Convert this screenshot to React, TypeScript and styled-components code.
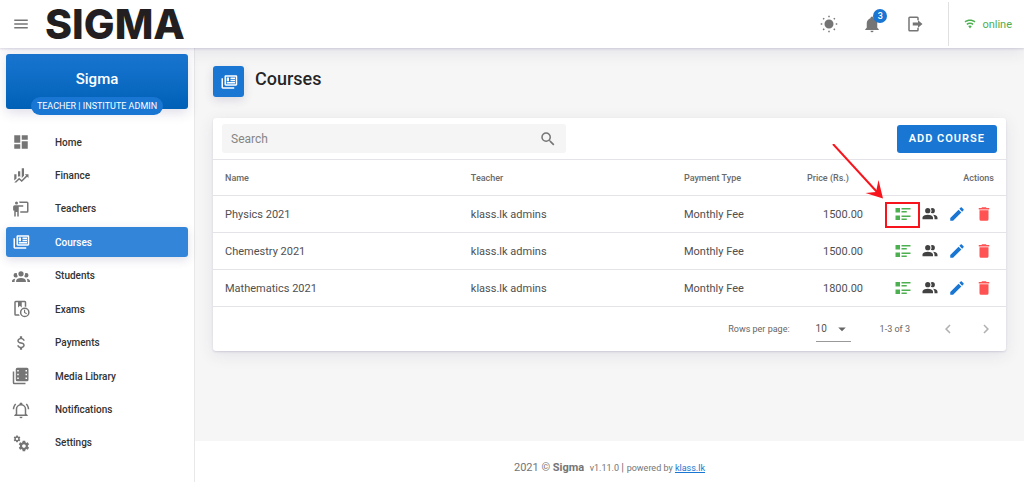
import React from "react";
import styled, { createGlobalStyle } from "styled-components";

const blue = "#1976d2";

const GlobalStyle = createGlobalStyle`
  *, *::before, *::after { box-sizing: border-box; }
  body {
    margin: 0;
    background: #f6f6f6;
    color: rgba(0, 0, 0, 0.87);
    font-family: Roboto, "Liberation Sans", sans-serif;
    font-size: 12px;
  }
  button, input, select { font-family: inherit; }
`;

const paths = {
  menu: "M3,6H21V8H3V6M3,11H21V13H3V11M3,16H21V18H3V16Z",
  dashboard: "M13,3V9H21V3M13,21H21V11H13M3,21H11V15H3M3,13H11V3H3V13Z",
  finance:
    "M6,16.5L3,19.44V11H6M11,14.66L9.43,13.32L8,14.64V7H11M16,13L13,16V3H16M18.81,12.81L17,11H22V16L20.21,14.21L13,21.36L9.53,18.34L5.75,22H3L9.47,15.66L13,18.64",
  teach:
    "M20,17A2,2 0 0,0 22,15V4A2,2 0 0,0 20,2H9.46C9.81,2.61 10,3.3 10,4H20V15H11V17M15,7V9H9V22H7V16H5V22H3V14H1.5V9A2,2 0 0,1 3.5,7H15M8,4A2,2 0 0,1 6,6A2,2 0 0,1 4,4A2,2 0 0,1 6,2A2,2 0 0,1 8,4Z",
  news: "M4 7V19H19V21H4C2 21 2 19 2 19V7H4M21 5V15H8V5H21M21.3 3H7.7C6.76 3 6 3.7 6 4.55V15.45C6 16.31 6.76 17 7.7 17H21.3C22.24 17 23 16.31 23 15.45V4.55C23 3.7 22.24 3 21.3 3M9 6H12V11H9V6M20 14H9V12H20V14M20 8H14V6H20V8M20 11H14V9H20V11Z",
  group:
    "M12,5.5A3.5,3.5 0 0,1 15.5,9A3.5,3.5 0 0,1 12,12.5A3.5,3.5 0 0,1 8.5,9A3.5,3.5 0 0,1 12,5.5M5,8C5.56,8 6.08,8.15 6.53,8.42C6.38,9.85 6.8,11.27 7.66,12.38C7.16,13.34 6.16,14 5,14A3,3 0 0,1 2,11A3,3 0 0,1 5,8M19,8A3,3 0 0,1 22,11A3,3 0 0,1 19,14C17.84,14 16.84,13.34 16.34,12.38C17.2,11.27 17.62,9.85 17.47,8.42C17.92,8.15 18.44,8 19,8M5.5,18.25C5.5,16.18 8.41,14.5 12,14.5C15.59,14.5 18.5,16.18 18.5,18.25V20H5.5V18.25M0,20V18.5C0,17.11 1.89,15.94 4.45,15.6C3.86,16.28 3.5,17.22 3.5,18.25V20H0M24,20H20.5V18.25C20.5,17.22 20.14,16.28 19.55,15.6C22.11,15.94 24,17.11 24,18.5V20Z",
  bookClock:
    "M5 1H17A2 2 0 0 1 19 3V9.1A7 7 0 0 0 17 9V3H13V10L10.5 7.8L8 10V3H5V19H9.3A7 7 0 0 0 10.3 21H5A2 2 0 0 1 3 19V3A2 2 0 0 1 5 1M17 10A6.5 6.5 0 1 1 17 23A6.5 6.5 0 1 1 17 10M17 12A4.5 4.5 0 1 0 17 21A4.5 4.5 0 1 0 17 12M16 13H17.5V16.2L20 17.7L19.2 18.9L16 17Z",
  dollar:
    "M7,15H9C9,16.08 10.37,17 12,17C13.63,17 15,16.08 15,15C15,13.9 13.96,13.5 11.76,12.97C9.64,12.44 7,11.78 7,9C7,7.21 8.47,5.69 10.5,5.18V3H13.5V5.18C15.53,5.69 17,7.21 17,9H15C15,7.92 13.63,7 12,7C10.37,7 9,7.92 9,9C9,10.1 10.04,10.5 12.24,11.03C14.36,11.56 17,12.22 17,15C17,16.79 15.53,18.31 13.5,18.82V21H10.5V18.82C8.47,18.31 7,16.79 7,15Z",
  film: "M3 6H1V21A2 2 0 0 0 3 23H18V21H3V6M7 1H20A2 2 0 0 1 22 3V17A2 2 0 0 1 20 19H7A2 2 0 0 1 5 17V3A2 2 0 0 1 7 1M7 4V6H9V4H7M7 9V11H9V9H7M7 14V16H9V14H7M18 4V6H20V4H18M18 9V11H20V9H18M18 14V16H20V14H18Z",
  bellRing:
    "M10,21H14A2,2 0 0,1 12,23A2,2 0 0,1 10,21M21,19V20H3V19L5,17V11C5,7.9 7.03,5.17 10,4.29C10,4.19 10,4.1 10,4A2,2 0 0,1 12,2A2,2 0 0,1 14,4C14,4.1 14,4.19 14,4.29C16.97,5.17 19,7.9 19,11V17L21,19M17,11A5,5 0 0,0 12,6A5,5 0 0,0 7,11V18H17V11M19.75,3.19L18.33,4.61C20.04,6.3 21,8.6 21,11H23C23,8.07 21.84,5.25 19.75,3.19M1,11H3C3,8.6 3.96,6.3 5.67,4.61L4.25,3.19C2.16,5.25 1,8.07 1,11Z",
  cogs: "M15.9,18.45C17.25,18.45 18.35,17.35 18.35,16C18.35,14.65 17.25,13.55 15.9,13.55C14.54,13.55 13.45,14.65 13.45,16C13.45,17.35 14.54,18.45 15.9,18.45M21.1,16.68L22.58,17.84C22.71,17.95 22.75,18.13 22.66,18.29L21.26,20.71C21.17,20.86 21,20.92 20.83,20.86L19.09,20.16C18.73,20.44 18.33,20.67 17.91,20.85L17.64,22.7C17.62,22.87 17.47,23 17.3,23H14.5C14.32,23 14.18,22.87 14.15,22.7L13.89,20.85C13.46,20.67 13.07,20.44 12.71,20.16L10.96,20.86C10.81,20.92 10.62,20.86 10.54,20.71L9.14,18.29C9.05,18.13 9.09,17.95 9.22,17.84L10.7,16.68L10.65,16L10.7,15.31L9.22,14.16C9.09,14.05 9.05,13.86 9.14,13.71L10.54,11.29C10.62,11.13 10.81,11.07 10.96,11.13L12.71,11.84C13.07,11.56 13.46,11.32 13.89,11.15L14.15,9.29C14.18,9.13 14.32,9 14.5,9H17.3C17.47,9 17.62,9.13 17.64,9.29L17.91,11.15C18.33,11.32 18.73,11.56 19.09,11.84L20.83,11.13C21,11.07 21.17,11.13 21.26,11.29L22.66,13.71C22.75,13.86 22.71,14.05 22.58,14.16L21.1,15.31L21.15,16L21.1,16.68M6.69,8.07C7.56,8.07 8.26,7.37 8.26,6.5C8.26,5.63 7.56,4.92 6.69,4.92A1.58,1.58 0 0,0 5.11,6.5C5.11,7.37 5.82,8.07 6.69,8.07M10.03,6.94L11,7.68C11.07,7.75 11.09,7.87 11.03,7.97L10.13,9.53C10.08,9.63 9.96,9.67 9.86,9.63L8.74,9.18L8,9.62L7.81,10.81C7.79,10.92 7.7,11 7.59,11H5.79C5.67,11 5.58,10.92 5.56,10.81L5.4,9.62L4.64,9.18L3.52,9.63C3.41,9.67 3.3,9.63 3.24,9.53L2.34,7.97C2.28,7.87 2.31,7.75 2.39,7.68L3.34,6.94L3.31,6.5L3.34,6.06L2.39,5.32C2.31,5.25 2.28,5.13 2.34,5.03L3.24,3.47C3.3,3.37 3.41,3.33 3.52,3.37L4.63,3.82L5.4,3.38L5.56,2.19C5.58,2.08 5.67,2 5.79,2H7.59C7.7,2 7.79,2.08 7.81,2.19L8,3.38L8.74,3.82L9.86,3.37C9.96,3.33 10.08,3.37 10.13,3.47L11.03,5.03C11.09,5.13 11.07,5.25 11,5.32L10.03,6.06L10.06,6.5L10.03,6.94Z",
  sun: "M12 6A6 6 0 1 1 12 18A6 6 0 1 1 12 6M11 1H13V3H11V1M11 21H13V23H11V21M1 11H3V13H1V11M21 11H23V13H21V11M4.9 3.5L6.3 4.9L4.9 6.3L3.5 4.9L4.9 3.5M19.1 3.5L20.5 4.9L19.1 6.3L17.7 4.9L19.1 3.5M4.9 17.7L6.3 19.1L4.9 20.5L3.5 19.1L4.9 17.7M19.1 17.7L20.5 19.1L19.1 20.5L17.7 19.1L19.1 17.7Z",
  bell: "M21,19V20H3V19L5,17V11C5,7.9 7.03,5.17 10,4.29C10,4.19 10,4.1 10,4A2,2 0 0,1 12,2A2,2 0 0,1 14,4C14,4.1 14,4.19 14,4.29C16.97,5.17 19,7.9 19,11V17L21,19M14,21A2,2 0 0,1 12,23A2,2 0 0,1 10,21",
  exit: "M5 2H15A2 2 0 0 1 17 4V7H15V4H5V20H15V17H17V20A2 2 0 0 1 15 22H5A2 2 0 0 1 3 20V4A2 2 0 0 1 5 2M9 10H16V7L22 12L16 17V14H9Z",
  wifi: "M12,21L15.6,16.2C14.6,15.45 13.35,15 12,15C10.65,15 9.4,15.45 8.4,16.2L12,21M12,3C7.95,3 4.21,4.34 1.2,6.6L3,9C5.5,7.12 8.62,6 12,6C15.38,6 18.5,7.12 21,9L22.8,6.6C19.79,4.34 16.05,3 12,3M12,9C9.3,9 6.81,9.89 4.8,11.4L6.6,13.8C8.1,12.67 9.97,12 12,12C14.03,12 15.9,12.67 17.4,13.8L19.2,11.4C17.19,9.89 14.7,9 12,9Z",
  search:
    "M9.5,3A6.5,6.5 0 0,1 16,9.5C16,11.11 15.41,12.59 14.44,13.73L14.71,14H15.5L20.5,19L19,20.5L14,15.5V14.71L13.73,14.44C12.59,15.41 11.11,16 9.5,16A6.5,6.5 0 0,1 3,9.5A6.5,6.5 0 0,1 9.5,3M9.5,5C7,5 5,7 5,9.5C5,12 7,14 9.5,14C12,14 14,12 14,9.5C14,7 12,5 9.5,5Z",
  list: "M2 4H8V10H2V4M10 4H22V6H10V4M10 8H17V10H10V8M2 14H8V20H2V14M10 14H22V16H10V14M10 18H17V20H10V18Z",
  people:
    "M16 17V19H2V17S2 13 9 13 16 17 16 17M12.5 7.5A3.5 3.5 0 1 0 9 11A3.5 3.5 0 0 0 12.5 7.5M15.94 13A5.32 5.32 0 0 1 18 17V19H22V17S22 13.37 15.94 13M15 4A3.39 3.39 0 0 0 13.07 4.59A5 5 0 0 1 13.07 10.41A3.39 3.39 0 0 0 15 11A3.5 3.5 0 0 0 15 4Z",
  pencil:
    "M20.71,7.04C21.1,6.65 21.1,6 20.71,5.63L18.37,3.29C18,2.9 17.35,2.9 16.96,3.29L15.12,5.12L18.87,8.87M3,17.25V21H6.75L17.81,9.93L14.06,6.18L3,17.25Z",
  trash: "M19,4H15.5L14.5,3H9.5L8.5,4H5V6H19M6,19A2,2 0 0,0 8,21H16A2,2 0 0,0 18,19V7H6V19Z",
  left: "M15.41,16.58L10.83,12L15.41,7.41L14,6L8,12L14,18L15.41,16.58Z",
  right: "M8.59,16.58L13.17,12L8.59,7.41L10,6L16,12L10,18L8.59,16.58Z",
  caret: "M7,10L12,15L17,10H7Z",
};

type IconName = keyof typeof paths;

const Svg = styled.svg<{ $size: number }>`
  display: block;
  flex: none;
  width: ${(p) => p.$size}px;
  height: ${(p) => p.$size}px;
  fill: currentColor;
`;

const Icon = ({ name, size = 18 }: { name: IconName; size?: number }) => (
  <Svg $size={size} viewBox="0 0 24 24" aria-hidden="true">
    <path fillRule="evenodd" d={paths[name]} />
  </Svg>
);

const Page = styled.div`
  display: flex;
  flex-direction: column;
  min-height: 100vh;
`;

const TopBar = styled.header`
  position: relative;
  z-index: 2;
  display: flex;
  align-items: center;
  height: 48px;
  padding-left: 12px;
  background: #fff;
  box-shadow: 0 1px 2px rgba(60, 50, 110, 0.16), 0 4px 16px rgba(60, 50, 110, 0.1);
`;

const IconButton = styled.button<{ $color?: string }>`
  position: relative;
  display: flex;
  padding: 0;
  border: 0;
  background: none;
  color: ${(p) => p.$color ?? "#757575"};
  cursor: pointer;

  &:disabled {
    color: #b0b0b0;
    cursor: default;
  }
`;

const Brand = styled.div`
  margin-left: 15px;
  color: #231f20;
  font-family: Inter, "Liberation Sans", sans-serif;
  font-size: 41px;
  font-weight: 800;
  line-height: 46px;
`;

const Tools = styled.div`
  display: flex;
  align-items: center;
  gap: 25px;
  margin-left: auto;
  padding-right: 24px;
`;

const Badge = styled.span`
  position: absolute;
  top: -6px;
  left: 10px;
  width: 14px;
  height: 14px;
  border-radius: 50%;
  background: ${blue};
  color: #fff;
  font-size: 9px;
  font-weight: 500;
  line-height: 14px;
  text-align: center;
`;

const Status = styled.div`
  display: flex;
  align-items: center;
  gap: 6px;
  height: 44px;
  padding: 0 12px 0 15px;
  border-left: 1px solid #e0e0e0;
  color: #4caf50;
  font-size: 11px;
`;

const Body = styled.div`
  display: flex;
  flex: 1;
`;

const Sidebar = styled.aside`
  flex: none;
  width: 195px;
  padding: 6px 6px 0;
  border-right: 1px solid #e8e8e8;
  background: #fff;
`;

const Profile = styled.div`
  display: flex;
  flex-direction: column;
  align-items: center;
  height: 55px;
  padding-top: 15px;
  border-radius: 3px;
  background: linear-gradient(${blue}, #0060b6);
  color: #fff;
  box-shadow: 0 4px 12px rgba(60, 50, 110, 0.16);
`;

const ProfileName = styled.div`
  font-size: 15px;
  font-weight: 500;
  line-height: 20px;
`;

const RoleChip = styled.div`
  margin-top: 8px;
  padding: 0 6px;
  border-radius: 9px;
  background: ${blue};
  font-size: 9px;
  line-height: 18px;
  white-space: nowrap;
`;

const Menu = styled.nav`
  display: flex;
  flex-direction: column;
  justify-content: space-between;
  height: 331px;
  margin-top: 18px;
`;

const MenuLink = styled.a<{ $active?: boolean }>`
  display: flex;
  align-items: center;
  gap: 25px;
  height: 30px;
  padding-left: 6px;
  border-radius: 3px;
  color: ${(p) => (p.$active ? "#fff" : "#333")};
  background: ${(p) => (p.$active ? "#3385d9" : "none")};
  box-shadow: ${(p) => (p.$active ? "0 3px 10px rgba(60, 50, 110, 0.16)" : "none")};
  font-size: 10px;
  font-weight: 500;
  text-decoration: none;

  svg { color: ${(p) => (p.$active ? "#fff" : "#757575")}; }
`;

const Content = styled.div`
  display: flex;
  flex: 1;
  flex-direction: column;
  min-width: 0;
`;

const Main = styled.main`
  flex: 1;
  padding: 18px 18px 24px;
`;

const Heading = styled.div`
  display: flex;
  gap: 11px;
  margin-bottom: 21px;
`;

const HeadingTile = styled.div`
  display: flex;
  align-items: center;
  justify-content: center;
  width: 31px;
  height: 31px;
  border-radius: 3px;
  background: ${blue};
  color: #fff;
  box-shadow: 0 3px 10px rgba(60, 50, 110, 0.16);
`;

const Title = styled.h1`
  margin: 0;
  font-size: 18px;
  font-weight: 500;
  line-height: 26px;
`;

const Card = styled.section`
  border-radius: 3px;
  background: #fff;
  box-shadow: 0 1px 2px rgba(60, 50, 110, 0.16), 0 4px 16px rgba(60, 50, 110, 0.1);
`;

const Toolbar = styled.div`
  display: flex;
  align-items: center;
  justify-content: space-between;
  height: 41px;
  padding: 0 9px;
`;

const SearchBox = styled.label`
  display: flex;
  flex: 0 1 344px;
  align-items: center;
  height: 29px;
  padding: 0 9px;
  border-radius: 3px;
  background: #f5f5f5;
  color: #757575;
`;

const SearchInput = styled.input`
  flex: 1;
  min-width: 0;
  padding: 0;
  border: 0;
  outline: 0;
  background: none;
  font-size: 12px;

  &::placeholder { color: #858585; }
`;

const AddButton = styled.button`
  height: 28px;
  padding: 0 12px;
  border: 0;
  border-radius: 3px;
  background: ${blue};
  color: #fff;
  font-size: 11px;
  font-weight: 600;
  letter-spacing: 1px;
  cursor: pointer;
`;

const Table = styled.table`
  width: 100%;
  border-collapse: collapse;
  table-layout: fixed;
`;

const HeadCell = styled.th<{ $right?: boolean; $width?: string; $inset?: boolean }>`
  width: ${(p) => p.$width ?? "auto"};
  height: 36px;
  padding: 0 ${(p) => (p.$inset ? 26 : 12)}px 0 ${(p) => (p.$inset ? 0 : 12)}px;
  border-top: 1px solid #e4e4e8;
  border-bottom: 1px solid #e4e4e8;
  color: #6a6a6a;
  font-size: 9px;
  font-weight: 500;
  text-align: ${(p) => (p.$right ? "right" : "left")};
  white-space: nowrap;
`;

const Cell = styled.td<{ $right?: boolean }>`
  height: 37px;
  padding: 0 12px;
  border-bottom: 1px solid #e4e4e8;
  color: #505050;
  font-size: 11px;
  text-align: ${(p) => (p.$right ? "right" : "left")};
`;

const Actions = styled.div`
  display: flex;
  justify-content: flex-end;
  gap: 9px;
  padding-right: 1px;
`;

const Callout = styled.svg`
  position: absolute;
  right: -8px;
  bottom: -5px;
  width: 92px;
  height: 84px;
  fill: none;
  stroke: #f8141c;
  pointer-events: none;
`;

const Pager = styled.div`
  display: flex;
  align-items: center;
  justify-content: flex-end;
  height: 44px;
  padding-right: 11px;
  color: #666;
  font-size: 9px;
`;

const RowsLabel = styled.label`
  display: flex;
  align-items: center;
  gap: 26px;
`;

const SelectWrap = styled.span`
  position: relative;
  display: flex;
  align-items: center;
  width: 35px;
  height: 26px;
  border-bottom: 1px solid #999;

  svg {
    position: absolute;
    right: 0;
    pointer-events: none;
  }
`;

const RowsSelect = styled.select`
  width: 100%;
  padding: 0;
  border: 0;
  appearance: none;
  background: none;
  color: #555;
  font-size: 10px;
`;

const Range = styled.span`
  margin: 0 29px;
`;

const PageButtons = styled.div`
  display: flex;
  gap: 20px;
`;

const Footer = styled.footer`
  display: flex;
  align-items: center;
  justify-content: center;
  height: 41px;
  padding-top: 12px;
  background: #fff;
  color: #757575;
  font-size: 11px;
  white-space: pre;
`;

const Small = styled.span`
  font-size: 9px;

  a { color: ${blue}; }
`;

const menu: { label: string; icon: IconName; active?: boolean }[] = [
  { label: "Home", icon: "dashboard" },
  { label: "Finance", icon: "finance" },
  { label: "Teachers", icon: "teach" },
  { label: "Courses", icon: "news", active: true },
  { label: "Students", icon: "group" },
  { label: "Exams", icon: "bookClock" },
  { label: "Payments", icon: "dollar" },
  { label: "Media Library", icon: "film" },
  { label: "Notifications", icon: "bellRing" },
  { label: "Settings", icon: "cogs" },
];

const courses = [
  { name: "Physics 2021", price: "1500.00", marked: true },
  { name: "Chemestry 2021", price: "1500.00" },
  { name: "Mathematics 2021", price: "1800.00" },
];

export default function App() {
  return (
    <Page>
      <GlobalStyle />
      <TopBar>
        <IconButton aria-label="Menu"><Icon name="menu" /></IconButton>
        <Brand>SIGMA</Brand>
        <Tools>
          <IconButton aria-label="Theme"><Icon name="sun" /></IconButton>
          <IconButton aria-label="Notifications">
            <Icon name="bell" />
            <Badge>3</Badge>
          </IconButton>
          <IconButton aria-label="Log out"><Icon name="exit" /></IconButton>
        </Tools>
        <Status>
          <Icon name="wifi" size={12} />
          online
        </Status>
      </TopBar>
      <Body>
        <Sidebar>
          <Profile>
            <ProfileName>Sigma</ProfileName>
            <RoleChip>TEACHER | INSTITUTE ADMIN</RoleChip>
          </Profile>
          <Menu>
            {menu.map((item) => (
              <MenuLink key={item.label} href="#" $active={item.active}>
                <Icon name={item.icon} />
                {item.label}
              </MenuLink>
            ))}
          </Menu>
        </Sidebar>
        <Content>
          <Main>
            <Heading>
              <HeadingTile><Icon name="news" /></HeadingTile>
              <Title>Courses</Title>
            </Heading>
            <Card>
              <Toolbar>
                <SearchBox>
                  <SearchInput placeholder="Search" aria-label="Search" />
                  <Icon name="search" />
                </SearchBox>
                <AddButton>ADD COURSE</AddButton>
              </Toolbar>
              <Table>
                <thead>
                  <tr>
                    <HeadCell $width="31%">Name</HeadCell>
                    <HeadCell>Teacher</HeadCell>
                    <HeadCell $width="14%">Payment Type</HeadCell>
                    <HeadCell $width="92px" $right $inset>Price (Rs.)</HeadCell>
                    <HeadCell $width="131px" $right>Actions</HeadCell>
                  </tr>
                </thead>
                <tbody>
                  {courses.map((course) => (
                    <tr key={course.name}>
                      <Cell>{course.name}</Cell>
                      <Cell>klass.lk admins</Cell>
                      <Cell>Monthly Fee</Cell>
                      <Cell $right>{course.price}</Cell>
                      <Cell>
                        <Actions>
                          <IconButton $color="#4caf50" aria-label="Details">
                            <Icon name="list" />
                            {course.marked && (
                              <Callout viewBox="0 0 92 84">
                                <rect x="58" y="59" width="33" height="24" strokeWidth="2" />
                                <path strokeWidth="2" d="M5 0L49 48" />
                                <path fill="#f8141c" stroke="none" d="M55 54.5L37.5 49L48 48L50.5 36Z" />
                              </Callout>
                            )}
                          </IconButton>
                          <IconButton $color="#424242" aria-label="Students"><Icon name="people" /></IconButton>
                          <IconButton $color={blue} aria-label="Edit"><Icon name="pencil" /></IconButton>
                          <IconButton $color="#ff5252" aria-label="Delete"><Icon name="trash" /></IconButton>
                        </Actions>
                      </Cell>
                    </tr>
                  ))}
                </tbody>
              </Table>
              <Pager>
                <RowsLabel>
                  Rows per page:
                  <SelectWrap>
                    <RowsSelect><option>10</option></RowsSelect>
                    <Icon name="caret" />
                  </SelectWrap>
                </RowsLabel>
                <Range>1-3 of 3</Range>
                <PageButtons>
                  <IconButton disabled aria-label="Previous page"><Icon name="left" /></IconButton>
                  <IconButton disabled aria-label="Next page"><Icon name="right" /></IconButton>
                </PageButtons>
              </Pager>
            </Card>
          </Main>
          <Footer>
            <span>2021 © <b>Sigma</b>  </span>
            <Small>v1.11.0 </Small>
            <span>| </span>
            <Small>powered by <a href="#">klass.lk</a></Small>
          </Footer>
        </Content>
      </Body>
    </Page>
  );
}
